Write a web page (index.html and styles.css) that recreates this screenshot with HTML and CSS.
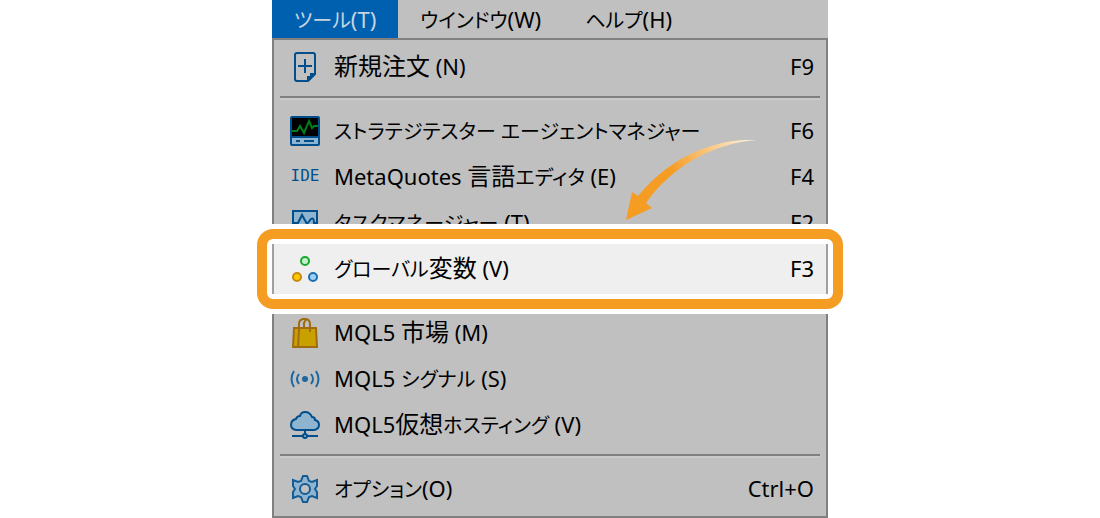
FILE: index.html
```
<!DOCTYPE html>
<html lang="ja">

<head>
  <meta charset="UTF-8">
  <meta name="viewport" content="width=device-width, initial-scale=1.0">
  <title>ツール</title>
  <link rel="stylesheet" href="styles.css">
</head>

<body>

  <div class="window">

    <nav class="menu-bar">
      <button class="menu-tab active"><span class="kana">ツール</span>(T)</button>
      <button class="menu-tab"><span class="kana">ウインドウ</span>(W)</button>
      <button class="menu-tab"><span class="kana">ヘルプ</span>(H)</button>
    </nav>

    <div class="menu">

      <button class="menu-item">
        <svg class="icon" viewBox="0 0 30 30">
          <path d="M7 1h16q2 0 2 2v19l-7 7H7q-2 0-2-2V3q0-2 2-2z" fill="none" stroke="#004f8c" stroke-width="2" />
          <path d="M25 21v2l-6 6h-2v-5h3v-3z" fill="#004f8c" />
          <path d="M15 7v14M8 14h14" stroke="#004f8c" stroke-width="2" />
        </svg>
        <span class="label"><span class="kanji">新規注文</span> (N)</span>
        <span class="shortcut">F9</span>
      </button>

      <hr class="separator">

      <button class="menu-item">
        <svg class="icon" viewBox="0 0 30 30">
          <rect x="1" y="1" width="28" height="28" rx="1" fill="#8fb4d0" stroke="#004f8c" stroke-width="2" />
          <path d="M2 2h26v18H2z" />
          <path d="M1 21h28M6 25h4M14 25h10" stroke="#004f8c" stroke-width="2" />
          <path d="M2 15h5l3-5 4 7 5-12 3 7 2-2h4" fill="none" stroke="#008016" stroke-width="2" />
        </svg>
        <span class="label"><span class="kana">ストラテジテスター エージェントマネジャー</span></span>
        <span class="shortcut">F6</span>
      </button>

      <button class="menu-item">
        <span class="icon icon-text">IDE</span>
        <span class="label">MetaQuotes <span class="kanji">言語</span><span class="kana">エディタ</span> (E)</span>
        <span class="shortcut">F4</span>
      </button>

      <button class="menu-item">
        <svg class="icon" viewBox="0 0 30 30">
          <rect x="3" y="3" width="24" height="24" fill="#8fb4d0" stroke="#004f8c" stroke-width="2" />
          <path d="M4 15h4l4-8 5 9 4-5q3-2 3 4h3" fill="none" stroke="#004f8c" stroke-width="2" />
        </svg>
        <span class="label"><span class="kana">タスクマネージャー</span> (T)</span>
        <span class="shortcut">F2</span>
      </button>

      <button class="menu-item highlighted">
        <svg class="icon" viewBox="0 0 30 30">
          <circle cx="15" cy="7" r="4" fill="#c6f0cd" stroke="#18a830" stroke-width="2" />
          <circle cx="7" cy="23" r="4" fill="#ffc800" stroke="#c68a10" stroke-width="2" />
          <circle cx="23" cy="23" r="4" fill="#9fd0f5" stroke="#1c70b0" stroke-width="2" />
        </svg>
        <span class="label"><span class="kana">グローバル</span><span class="kanji">変数</span> (V)</span>
        <span class="shortcut">F3</span>
      </button>

      <hr class="separator">

      <button class="menu-item">
        <svg class="icon" viewBox="0 0 30 30">
          <path d="M4 10h22l1 19H3z" fill="#c8a000" stroke="#a06c10" stroke-width="2" />
          <path d="M9 10L8 29" stroke="#a06c10" stroke-width="2" />
          <path d="M9 14V6q0-4 4-5h3q4 1 4 5v8M14 10V5l2-4" fill="none" stroke="#a06c10" stroke-width="2" />
        </svg>
        <span class="label">MQL5 <span class="kanji">市場</span> (M)</span>
        <span class="shortcut"></span>
      </button>

      <button class="menu-item">
        <svg class="icon" viewBox="0 0 30 30">
          <circle cx="15" cy="15" r="3" fill="#1d669f" />
          <path d="M9 10q-4 5 0 10M21 10q4 5 0 10M4 7q-5 8 0 16M26 7q5 8 0 16" fill="none" stroke="#1d669f" stroke-width="2" />
        </svg>
        <span class="label">MQL5 <span class="kana">シグナル</span> (S)</span>
        <span class="shortcut"></span>
      </button>

      <button class="menu-item">
        <svg class="icon" viewBox="0 0 30 30">
          <path d="M6 20q-5-1-5-5 0-5 5-6 1-3 4-3 1-4 5-4 5 0 7 5 3 0 3 3 4 1 4 5 0 4-5 5z" fill="#8fb4d0" stroke="#004f8c" stroke-width="2" />
          <path d="M15 20v5M2 26h11M17 26h11" stroke="#004f8c" stroke-width="2" />
          <circle cx="15" cy="26" r="2" fill="#8fb4d0" stroke="#004f8c" stroke-width="2" />
        </svg>
        <span class="label">MQL5<span class="kanji">仮想</span><span class="kana">ホスティング</span> (V)</span>
        <span class="shortcut"></span>
      </button>

      <hr class="separator">

      <button class="menu-item">
        <svg class="icon" viewBox="0 0 30 30">
          <path d="M13 2h4l2 5 3 1 5-2v6l-2 3 2 3v6l-5-2-3 1-2 5h-4l-2-5-3-1-5 2v-6l2-3-2-3V6l5 2 3-1z" fill="#8fb4d0" stroke="#135c95" stroke-width="2" />
          <circle cx="15" cy="15" r="5" fill="#c0c0c0" stroke="#135c95" stroke-width="2" />
        </svg>
        <span class="label"><span class="kana">オプション</span>(O)</span>
        <span class="shortcut">Ctrl+O</span>
      </button>

      <svg class="arrow" viewBox="0 0 132 82">
        <defs>
          <linearGradient id="arrow-fade" x1="50" y1="40" x2="131" y2="0" gradientUnits="userSpaceOnUse">
            <stop offset="0" stop-color="#f59c23" />
            <stop offset="1" stop-color="#fff6e8" />
          </linearGradient>
        </defs>
        <path d="M0 80L6 52 12 56C42 20 84-2 131 0 88 3 46 26 20 63L26 68z" fill="url(#arrow-fade)" />
      </svg>

    </div>

  </div>

</body>

</html>
```
FILE: styles.css
```
body {
  margin: 0;
  background-color: #fff;
  font-family: "Noto Sans", "Noto Sans CJK JP", sans-serif;
}

button {
  border: none;
  background: none;
  color: #000;
  font-family: inherit;
  font-size: 22px;
  line-height: 28px;
  font-feature-settings: "palt";
  white-space: nowrap;
  cursor: pointer;
}

.window {
  max-width: 556px;
  margin: 0 auto;
  background-color: #c0c0c0;
}

.menu-bar {
  display: flex;
}

.menu-tab {
  padding: 5px 22px;
}

.menu-tab.active {
  background-color: #0060b0;
  color: #c8d4e0;
}

.menu {
  position: relative;
  border: 2px solid #808080;
  padding: 4px 0;
}

.menu-item {
  display: flex;
  align-items: center;
  gap: 14px;
  width: 100%;
  padding: 8px 12px 8px 16px;
  text-align: left;
}

.icon {
  flex: none;
  width: 30px;
  height: 30px;
}

.icon-text {
  color: #004f8c;
  font-family: "DejaVu Sans Mono", monospace;
  font-size: 16px;
  text-align: center;
}

.label {
  flex: 1;
}

.label,
.shortcut {
  padding-bottom: 2px;
}

.kanji {
  font-size: 24px;
  line-height: 1;
}

.kana {
  font-size: 20px;
  line-height: 1;
}

.separator {
  height: 2px;
  margin: 6px 6px 8px;
  border: none;
  border-bottom: 2px solid #cacaca;
  background-color: #808080;
}

/* 強調表示 */
.highlighted {
  position: relative;
  z-index: 1;
}

.highlighted::before {
  content: '';
  position: absolute;
  inset: -2px;
  z-index: -1;
  border: solid #a0a0a0;
  border-width: 0 2px;
  background-color: #efefef;
  box-shadow: 0 0 0 20px #fff;
}

.highlighted::after {
  content: '';
  position: absolute;
  inset: -17px;
  border: 10px solid #f59c23;
  border-radius: 16px;
}

.arrow {
  position: absolute;
  top: 100px;
  right: 68px;
  z-index: 2;
  width: 132px;
  height: 82px;
}
```
